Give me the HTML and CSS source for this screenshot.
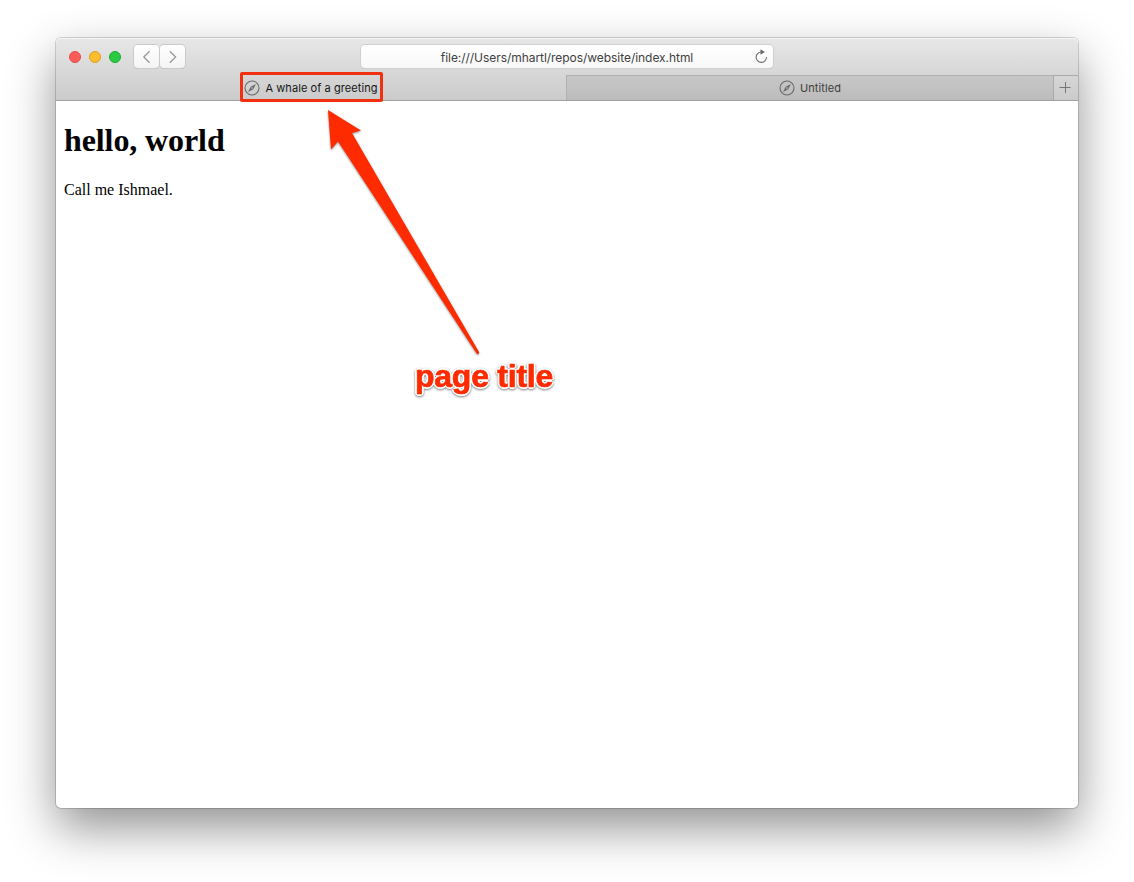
FILE: index.html
```html
<!DOCTYPE html>
<html lang="en">
<head>
<meta charset="utf-8">
<title>A whale of a greeting</title>
<link rel="stylesheet" href="styles.css">
</head>
<body>
<svg class="symbols" aria-hidden="true">
  <symbol id="compass" viewBox="0 0 16 16">
    <circle cx="8" cy="8" r="7" fill="none" stroke="#6a6a6a" stroke-width="1.1"/>
    <path d="M11.9 3.9 9.3 9.3 4.1 12.1 6.7 6.7Z" fill="#6a6a6a"/>
    <circle cx="8" cy="8" r=".8" fill="#d0d0d0"/>
  </symbol>
</svg>
<main class="window">
  <header class="chrome">
    <div class="toolbar">
      <div class="lights"><i class="light close"></i><i class="light minimize"></i><i class="light expand"></i></div>
      <div class="nav">
        <button class="nav-button" aria-label="Back"><svg width="12" height="14" viewBox="0 0 12 14"><path d="M8.600 1.300 2.800 7 8.600 12.700"/></svg></button>
        <button class="nav-button" aria-label="Forward"><svg width="12" height="14" viewBox="0 0 12 14"><path d="M2.800 1.300 8.600 7 2.800 12.700"/></svg></button>
      </div>
      <div class="address">
        <span class="url">file:///Users/mhartl/repos/website/index.html</span>
        <svg class="reload" width="14" height="15" viewBox="0 0 14 15"><path class="arc" d="M7.300 3A5.200 5.200 0 1 0 12.500 8.200"/><path class="tip" d="M6.500.2 10.900 3 6.500 5.800Z"/></svg>
      </div>
    </div>
    <div class="tabs">
      <div class="tab active"><span class="tab-label"><svg class="compass"><use href="#compass"/></svg><span class="tab-text first">A whale of a greeting</span></span></div>
      <div class="tab idle"><span class="tab-label"><svg class="compass"><use href="#compass"/></svg><span class="tab-text second">Untitled</span></span></div>
      <div class="add"><svg width="12" height="12" viewBox="0 0 12 12"><path d="M.5 5.5h11M6.500 0v11"/></svg></div>
    </div>
  </header>
  <article class="page">
    <h1 class="heading">hello, world</h1>
    <p class="paragraph">Call me Ishmael.</p>
  </article>
</main>
<div class="highlight"></div>
<svg class="arrow" width="170" height="260" viewBox="320 100 170 260"><path d="M328 110 361 130.500 352 133 479 352Q479.300 354.500 477 354L338 141.500 331 149.500Z"/></svg>
<div class="callout">page title</div>
</body>
</html>
```
FILE: styles.css
```css
* { box-sizing: border-box; }
body { margin: 0; height: 882px; padding: 38px 56px 0; overflow: hidden; background: #fff; }
.symbols { position: absolute; width: 0; height: 0; }
.window { width: 1022px; height: 770px; background: #fff; border-radius: 5px; box-shadow: 0 0 0 1px rgba(0,0,0,.16), 0 20px 48px rgba(0,0,0,.43); }
.chrome { height: 63px; border-radius: 5px 5px 0 0; border-bottom: 1px solid #a2a2a2; background: linear-gradient(#e7e7e7, #cbcbcb); box-shadow: inset 0 1px #f6f6f6; overflow: hidden; }
.toolbar { height: 37px; display: flex; align-items: flex-start; padding: 7px 0 0 13px; }
.lights { display: flex; gap: 8px; padding-top: 6px; width: 64px; }
.light { width: 12px; height: 12px; border-radius: 50%; }
.close { background: #fc5b57; border: 1px solid #e34b48; }
.minimize { background: #fdbc2e; border: 1px solid #dfa023; }
.expand { background: #29cb42; border: 1px solid #1bac2c; }
.nav { display: flex; gap: 1px; padding-left: 1px; }
.nav-button { width: 25px; height: 23px; padding: 0; display: flex; align-items: center; justify-content: center; border: 0; border-radius: 4px; background: linear-gradient(#fff, #f4f4f4); box-shadow: 0 0 0 1px #cacaca, 0 1px #b2b2b2; }
.nav-button path { fill: none; stroke: #999; stroke-width: 1.3; }
.address { width: 412px; height: 23px; margin-left: 176px; position: relative; display: flex; justify-content: center; align-items: center; border-radius: 4px; background: linear-gradient(#fff, #f8f8f8); box-shadow: 0 0 0 1px #cfcfcf, 0 1px #b5b5b5; }
.url { padding-top: 2px; font: 12px/16px Inter, sans-serif; letter-spacing: -.05px; color: #404040; white-space: nowrap; }
.reload { position: absolute; right: 5px; top: 4px; }
.arc { fill: none; stroke: #696969; stroke-width: 1.1; }
.tip { fill: #696969; }
.tabs { display: flex; height: 25px; }
.tab { display: flex; align-items: center; justify-content: center; }
.active { width: 510px; }
.idle { width: 487px; background: linear-gradient(#c7c7c7, #bcbcbc); border: solid #b1b1b1; border-width: 1px 0 0 1px; }
.tab-label { display: flex; align-items: center; gap: 5px; }
.compass { width: 16px; height: 16px; }
.tab-text { font: 11px/16px Inter, sans-serif; white-space: nowrap; }
.first { color: #151515; letter-spacing: .07px; }
.second { color: #3e3e3e; letter-spacing: .08px; }
.add { width: 25px; padding-right: 2px; display: flex; align-items: center; justify-content: center; border: solid #aaa; border-width: 1px 0 0 1px; }
.add path { fill: none; stroke: #777; }
.page { padding: 21px 8px; font-family: "Liberation Serif", serif; color: #000; }
.heading { margin: 0; font-size: 32px; line-height: 37px; letter-spacing: -.1px; }
.paragraph { margin: 22px 0 0; font-size: 16px; line-height: 18px; }
.highlight { position: absolute; left: 240px; top: 72px; width: 143px; height: 30px; border: 3px solid #f03010; border-radius: 2px; }
.arrow { position: absolute; left: 320px; top: 100px; filter: drop-shadow(0 1px 1px rgba(0,0,0,.45)); }
.arrow path { fill: #ff2b00; }
.callout { position: absolute; left: 415px; top: 358px; font: bold 32px/37px "Liberation Sans", sans-serif; letter-spacing: -.25px; white-space: nowrap; color: #ff2b00; -webkit-text-stroke: .7px #ff2b00; text-shadow: 2px 0 #fff, -2px 0 #fff, 0 2px #fff, 0 -2px #fff, 1.4px 1.4px #fff, -1.4px 1.4px #fff, 1.4px -1.4px #fff, -1.4px -1.4px #fff; filter: drop-shadow(0 1px 1px rgba(0,0,0,.5)); }
```
